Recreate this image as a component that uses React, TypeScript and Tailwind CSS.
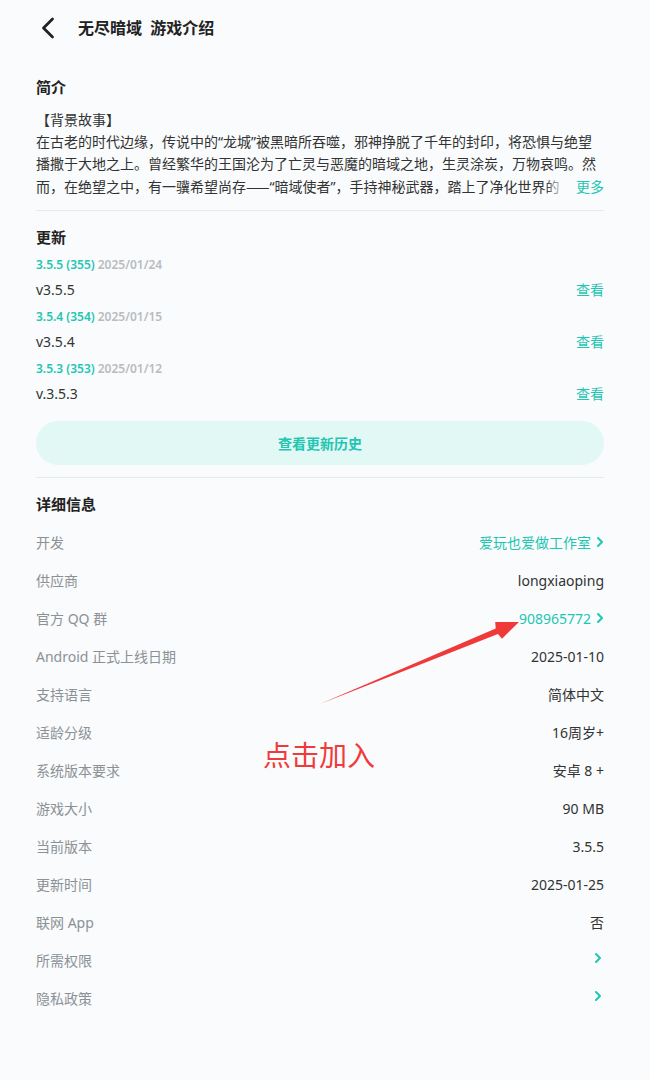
import React from "react";

const TEAL = "text-[#1fc6b2]";

function Chevron({ className = "" }: { className?: string }) {
  return (
    <svg width="8" height="12" viewBox="0 0 8 12" className={className} fill="none">
      <path d="M2 2 L6 6 L2 10" stroke="#1fc6b2" strokeWidth="2" strokeLinecap="round" strokeLinejoin="round" />
    </svg>
  );
}

const updates = [
  { ver: "3.5.5 (355)", date: "2025/01/24", name: "v3.5.5" },
  { ver: "3.5.4 (354)", date: "2025/01/15", name: "v3.5.4" },
  { ver: "3.5.3 (353)", date: "2025/01/12", name: "v.3.5.3" },
];

type Row = { label: string; value?: string; link?: boolean; chevronOnly?: boolean };
const rows: Row[] = [
  { label: "开发", value: "爱玩也爱做工作室", link: true },
  { label: "供应商", value: "longxiaoping" },
  { label: "官方 QQ 群", value: "908965772", link: true },
  { label: "Android 正式上线日期", value: "2025-01-10" },
  { label: "支持语言", value: "简体中文" },
  { label: "适龄分级", value: "16周岁+" },
  { label: "系统版本要求", value: "安卓 8 +" },
  { label: "游戏大小", value: "90 MB" },
  { label: "当前版本", value: "3.5.5" },
  { label: "更新时间", value: "2025-01-25" },
  { label: "联网 App", value: "否" },
  { label: "所需权限", chevronOnly: true },
  { label: "隐私政策", chevronOnly: true },
];

export default function App() {
  return (
    <div
      className="relative min-h-[1080px] w-[650px] bg-[#f9fbfc] text-[#333] text-[14px]"
      style={{ fontFamily: '"Noto Sans", "Noto Sans CJK SC", sans-serif' }}
    >
      {/* header */}
      <div className="flex h-14 items-center pl-[38px]">
        <svg width="24" height="24" viewBox="0 0 24 24" fill="none">
          <path d="M14.5 3 L5.5 12 L14.5 21" stroke="#222" strokeWidth="2.8" strokeLinecap="round" strokeLinejoin="round" />
        </svg>
        <div className="ml-4 text-[16px] font-bold text-[#222]">无尽暗域&nbsp;&nbsp;游戏介绍</div>
      </div>

      <div className="pl-9 pr-[46px]">
        {/* intro */}
        <div className="pt-5">
          <div className="text-[15px] font-bold leading-[22px] text-[#222]">简介</div>
          <div className="mt-[11px] leading-[22px] text-[#333]">
            <div className="whitespace-nowrap">【背景故事】</div>
            <div className="whitespace-nowrap">在古老的时代边缘，传说中的“龙城”被黑暗所吞噬，邪神挣脱了千年的封印，将恐惧与绝望</div>
            <div className="whitespace-nowrap">播撒于大地之上。曾经繁华的王国沦为了亡灵与恶魔的暗域之地，生灵涂炭，万物哀鸣。然</div>
            <div className="flex items-center">
              <div className="relative min-w-0 flex-1 overflow-hidden whitespace-nowrap">
                而，在绝望之中，有一骥希望尚存<span className="font-['Noto_Sans_CJK_SC']">——</span>“暗域使者”，手持神秘武器，踏上了净化世界的
                <div className="absolute right-0 top-0 h-full w-5 bg-gradient-to-r from-[#f9fbfc00] to-[#f9fbfc]" />
              </div>
              <div className={`shrink-0 pl-[10px] ${TEAL}`}>更多</div>
            </div>
          </div>
        </div>

        <div className="mt-3 h-px bg-[#e6eaed]" />

        {/* updates */}
        <div className="pt-[15px]">
          <div className="text-[15px] font-bold leading-[22px] text-[#222]">更新</div>
          <div className="mt-[5px]">
            {updates.map((u) => (
              <div key={u.ver} className="mb-1">
                <div className="flex h-6 items-center text-[12px] font-semibold">
                  <span className={TEAL}>{u.ver}</span>
                  <span className="ml-[3px] text-[#b8bcc0]">{u.date}</span>
                </div>
                <div className="flex h-6 items-center justify-between">
                  <span className="text-[#333]">{u.name}</span>
                  <span className={TEAL}>查看</span>
                </div>
              </div>
            ))}
          </div>
          <div className={`mt-4 flex h-11 items-center justify-center rounded-full bg-[#e2f8f5] text-[14px] font-bold ${TEAL}`}>
            查看更新历史
          </div>
        </div>

        <div className="mt-3 h-px bg-[#e6eaed]" />

        {/* details */}
        <div className="pt-[15px]">
          <div className="text-[15px] font-bold leading-[22px] text-[#222]">详细信息</div>
          <div className="mt-2">
            {rows.map((r) => (
              <div key={r.label} className="flex h-[38px] items-center justify-between">
                <span className="text-[#8c9196]">{r.label}</span>
                {r.chevronOnly ? (
                  <Chevron className="mr-[2px] -mt-[4px]" />
                ) : r.link ? (
                  <span className={`flex items-center gap-[5px] ${TEAL}`}>
                    {r.value}
                    <Chevron />
                  </span>
                ) : (
                  <span className="text-[#333]">{r.value}</span>
                )}
              </div>
            ))}
          </div>
        </div>
      </div>

      {/* annotation overlay */}
      <svg className="pointer-events-none absolute left-0 top-0" width="650" height="1080" viewBox="0 0 650 1080">
        <polygon
          points="320,704 497.9,634.0 502.0,638.7 519,622 495.2,622.1 495.7,628.4"
          fill="#f03a3a"
        />
      </svg>
      <div className="absolute left-[263px] top-[736px] text-[28px] leading-[38px] text-[#ef3b3b]">点击加入</div>
    </div>
  );
}
